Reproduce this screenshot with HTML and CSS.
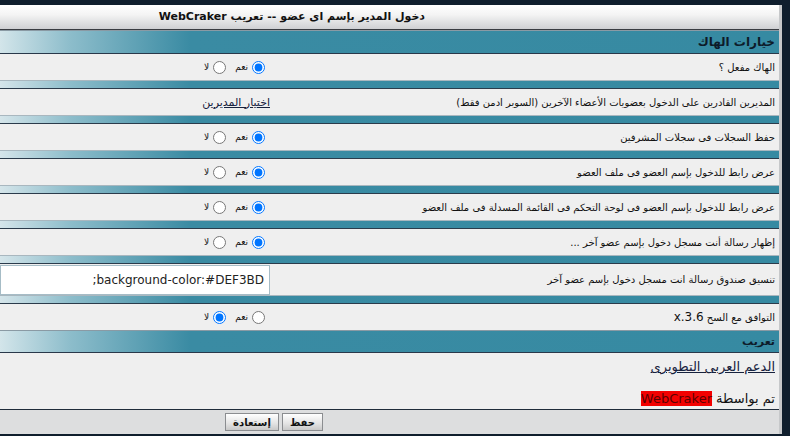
FILE: index.html
```html
<!DOCTYPE html>
<html lang="ar" dir="rtl">
<head>
  <meta charset="UTF-8" />
  <title>دخول المدير بإسم اى عضو</title>
  <link rel="stylesheet" href="styles.css">
</head>
<body>
  <div class="panel">
    <div class="title">دخول المدير بإسم اى عضو -- تعريب WebCraker</div>

    <div class="cat">خيارات الهاك</div>

    <div class="row">
      <div class="label">الهاك مفعل ؟</div>
      <div class="value">
        <label class="opt"><input type="radio" name="r1" checked> نعم</label>
        <label class="opt"><input type="radio" name="r1"> لا</label>
      </div>
    </div>
    <div class="sep"></div>

    <div class="row">
      <div class="label">المديرين القادرين على الدخول بعضويات الأعضاء الآخرين (السوبر ادمن فقط)</div>
      <div class="value"><a href="#" class="pick">اختيار المديرين</a></div>
    </div>
    <div class="sep"></div>

    <div class="row">
      <div class="label">حفظ السجلات فى سجلات المشرفين</div>
      <div class="value">
        <label class="opt"><input type="radio" name="r2" checked> نعم</label>
        <label class="opt"><input type="radio" name="r2"> لا</label>
      </div>
    </div>
    <div class="sep"></div>

    <div class="row">
      <div class="label">عرض رابط للدخول بإسم العضو فى ملف العضو</div>
      <div class="value">
        <label class="opt"><input type="radio" name="r3" checked> نعم</label>
        <label class="opt"><input type="radio" name="r3"> لا</label>
      </div>
    </div>
    <div class="sep"></div>

    <div class="row">
      <div class="label">عرض رابط للدخول بإسم العضو فى لوحة التحكم فى القائمة المسدلة فى ملف العضو</div>
      <div class="value">
        <label class="opt"><input type="radio" name="r4" checked> نعم</label>
        <label class="opt"><input type="radio" name="r4"> لا</label>
      </div>
    </div>
    <div class="sep"></div>

    <div class="row">
      <div class="label">إظهار رسالة أنت مسجل دخول بإسم عضو آخر ...</div>
      <div class="value">
        <label class="opt"><input type="radio" name="r5" checked> نعم</label>
        <label class="opt"><input type="radio" name="r5"> لا</label>
      </div>
    </div>
    <div class="sep"></div>

    <div class="row row-input">
      <div class="label">تنسيق صندوق رسالة انت مسجل دخول بإسم عضو آخر</div>
      <div class="value"><input type="text" class="field" value="background-color:#DEF3BD;"></div>
    </div>
    <div class="sep"></div>

    <div class="row">
      <div class="label">التوافق مع السح <span class="ver">3.6.x</span></div>
      <div class="value">
        <label class="opt"><input type="radio" name="r6"> نعم</label>
        <label class="opt"><input type="radio" name="r6" checked> لا</label>
      </div>
    </div>

    <div class="cat cat-small">تعريب</div>

    <div class="credits">
      <a href="#" class="support">الدعم العربى التطويرى</a>
      <div class="by">تم بواسطة <span class="brand">WebCraker</span></div>
    </div>

    <div class="footer">
      <button class="btn">حفظ</button>
      <button class="btn">إستعادة</button>
    </div>
  </div>
</body>
</html>
```

FILE: styles.css
```css
html, body {
  margin: 0;
  padding: 0;
  background: #0f1e2d;
}
body {
  padding-top: 5px;
  font-family: "DejaVu Sans", Tahoma, sans-serif;
  font-size: 11px;
  color: #111;
}
.panel {
  width: 779px;
  margin-left: 0;
  margin-right: auto;
  border-right: 3px solid #c6c8ca;
  background: #efefef;
}
.title {
  height: 24px;
  line-height: 24px;
  background: linear-gradient(#ffffff, #f4f4f4 40%, #cfd0d3);
  border-bottom: 1px solid #3a3d42;
  font-weight: bold;
  font-size: 11px;
  text-align: right;
  padding-right: 354px;
}
.cat {
  height: 22px;
  line-height: 22px;
  border-top: 1px solid #8a9aa4;
  border-bottom: 1px solid #29384a;
  background: linear-gradient(to right, #d3e5ea 0, #8dbdcb 70px, #3a8ba3 190px, #368aa2);
  padding-right: 4px;
  font-weight: bold;
  font-size: 12px;
  color: #0d1b2a;
}
.cat-small {
  height: 21px;
  line-height: 21px;
  font-size: 11px;
}
.row {
  display: grid;
  grid-template-columns: 1fr 273px;
  height: 26px;
  align-items: center;
  background: #efefef;
}
.row-input {
  height: 31px;
}
.label {
  padding-right: 4px;
  font-size: 10px;
  white-space: nowrap;
}
.ver {
  font-size: 12px;
}
.value {
  display: flex;
  align-items: center;
  gap: 9px;
  padding-right: 8px;
}
.opt {
  display: flex;
  align-items: center;
  gap: 4px;
  font-size: 9px;
}
.opt input {
  margin: 0;
  width: 13px;
  height: 13px;
}
.pick {
  color: #16213d;
  font-size: 11px;
  margin-right: -5px;
}
.field {
  box-sizing: border-box;
  width: 271px;
  height: 30px;
  margin: 0 -5px 0 0;
  border: 1px solid #a6bcc6;
  background: #fff;
  font-family: "DejaVu Sans", Verdana, sans-serif;
  font-size: 12px;
  color: #222;
  padding: 0 5px;
  direction: rtl;
}
.sep {
  height: 7px;
  border-top: 1px solid #a9b7bf;
  border-bottom: 1px solid #2b3b4b;
  background: linear-gradient(to right, #d5e5ea 0, #8dbdcb 70px, #3a8ba3 190px, #368aa2);
}
.credits {
  height: 56px;
  padding-right: 4px;
  font-size: 13px;
  box-sizing: border-box;
  padding-top: 4px;
}
.support {
  display: block;
  color: #16213d;
  line-height: 20px;
}
.by {
  margin-top: 13px;
  line-height: 18px;
}
.brand {
  background: #f20000;
  color: #5a0000;
}
.footer {
  height: 24px;
  border-top: 1px solid #1f2c3a;
  background: #dddedf;
  display: flex;
  align-items: center;
  gap: 3px;
  padding-right: 456px;
}
.btn {
  font-family: "DejaVu Sans", Tahoma, sans-serif;
  font-size: 10px;
  font-weight: bold;
  height: 18px;
  padding: 0 7px;
  border: 1px solid #8b8d90;
  background: linear-gradient(#ffffff, #e3e3e3 60%, #c9c9c9);
  color: #111;
  border-radius: 0;
}
```
